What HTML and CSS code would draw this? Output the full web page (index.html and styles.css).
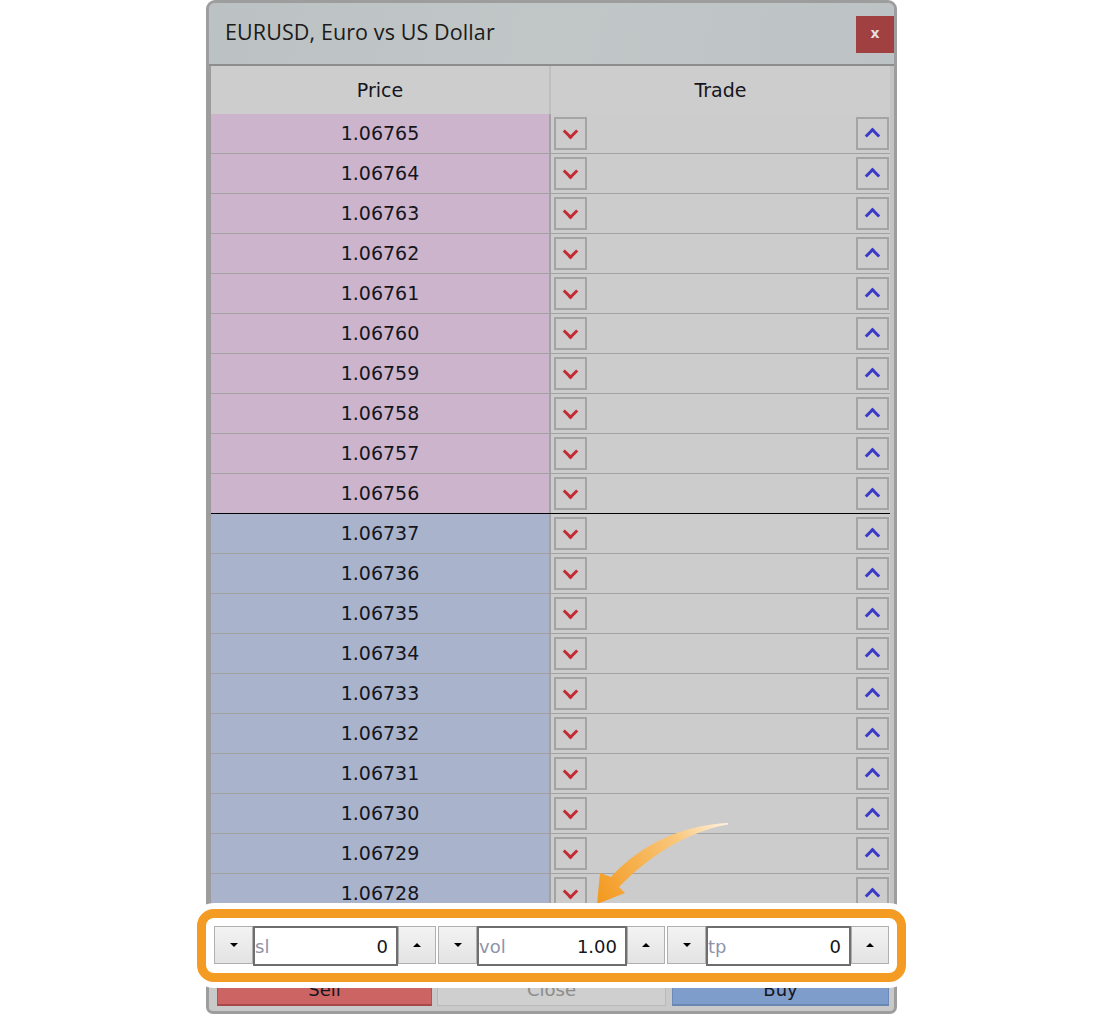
FILE: index.html
```html
<!DOCTYPE html>
<html>
<head>
<meta charset="utf-8">
<link rel="stylesheet" href="styles.css">
</head>
<body>
<div class="window">
  <div class="titlebar">
    <div class="title">EURUSD, Euro vs US Dollar</div>
    <div class="close-x">x</div>
  </div>
  <div class="grid">
    <div class="head"><div class="hcell hprice">Price</div><div class="hcell">Trade</div></div>
    <div class="row ask"><div class="price">1.06765</div><div class="trade"><span class="btn sell"></span><span class="btn buy"></span></div></div>
    <div class="row ask"><div class="price">1.06764</div><div class="trade"><span class="btn sell"></span><span class="btn buy"></span></div></div>
    <div class="row ask"><div class="price">1.06763</div><div class="trade"><span class="btn sell"></span><span class="btn buy"></span></div></div>
    <div class="row ask"><div class="price">1.06762</div><div class="trade"><span class="btn sell"></span><span class="btn buy"></span></div></div>
    <div class="row ask"><div class="price">1.06761</div><div class="trade"><span class="btn sell"></span><span class="btn buy"></span></div></div>
    <div class="row ask"><div class="price">1.06760</div><div class="trade"><span class="btn sell"></span><span class="btn buy"></span></div></div>
    <div class="row ask"><div class="price">1.06759</div><div class="trade"><span class="btn sell"></span><span class="btn buy"></span></div></div>
    <div class="row ask"><div class="price">1.06758</div><div class="trade"><span class="btn sell"></span><span class="btn buy"></span></div></div>
    <div class="row ask"><div class="price">1.06757</div><div class="trade"><span class="btn sell"></span><span class="btn buy"></span></div></div>
    <div class="row ask spread"><div class="price">1.06756</div><div class="trade"><span class="btn sell"></span><span class="btn buy"></span></div></div>
    <div class="row bid"><div class="price">1.06737</div><div class="trade"><span class="btn sell"></span><span class="btn buy"></span></div></div>
    <div class="row bid"><div class="price">1.06736</div><div class="trade"><span class="btn sell"></span><span class="btn buy"></span></div></div>
    <div class="row bid"><div class="price">1.06735</div><div class="trade"><span class="btn sell"></span><span class="btn buy"></span></div></div>
    <div class="row bid"><div class="price">1.06734</div><div class="trade"><span class="btn sell"></span><span class="btn buy"></span></div></div>
    <div class="row bid"><div class="price">1.06733</div><div class="trade"><span class="btn sell"></span><span class="btn buy"></span></div></div>
    <div class="row bid"><div class="price">1.06732</div><div class="trade"><span class="btn sell"></span><span class="btn buy"></span></div></div>
    <div class="row bid"><div class="price">1.06731</div><div class="trade"><span class="btn sell"></span><span class="btn buy"></span></div></div>
    <div class="row bid"><div class="price">1.06730</div><div class="trade"><span class="btn sell"></span><span class="btn buy"></span></div></div>
    <div class="row bid"><div class="price">1.06729</div><div class="trade"><span class="btn sell"></span><span class="btn buy"></span></div></div>
    <div class="row bid"><div class="price">1.06728</div><div class="trade"><span class="btn sell"></span><span class="btn buy"></span></div></div>
  </div>

  <div class="controls">
    <div class="spin">
      <div class="sbtn"><span class="tri-down"></span></div>
      <div class="field"><span class="lbl">sl</span><span class="val">0</span></div>
      <div class="sbtn"><span class="tri-up"></span></div>
    </div>
    <div class="spin">
      <div class="sbtn"><span class="tri-down"></span></div>
      <div class="field"><span class="lbl">vol</span><span class="val">1.00</span></div>
      <div class="sbtn"><span class="tri-up"></span></div>
    </div>
    <div class="spin">
      <div class="sbtn"><span class="tri-down"></span></div>
      <div class="field"><span class="lbl">tp</span><span class="val">0</span></div>
      <div class="sbtn"><span class="tri-up"></span></div>
    </div>
  </div>

  <div class="actions">
    <div class="act act-sell">Sell</div>
    <div class="act act-close">Close</div>
    <div class="act act-buy">Buy</div>
  </div>

  <svg class="arrow" width="160" height="100" viewBox="580 815 160 100">
    <defs>
      <linearGradient id="ag" gradientUnits="userSpaceOnUse" x1="728" y1="823" x2="600" y2="900">
        <stop offset="0" stop-color="#fff3e0"/>
        <stop offset="0.35" stop-color="#f9c77c"/>
        <stop offset="1" stop-color="#f39a20"/>
      </linearGradient>
    </defs>
    <path d="M728 823 C684 825 642 843 611 877 L600 873 L597 904 L625 893 L619 887 C648 857 686 832 728 824.5 Z" fill="url(#ag)"/>
  </svg>
</div>
</body>
</html>
```
FILE: styles.css
```css
* { box-sizing: border-box; }

body {
  margin: 0;
  background: #ffffff;
  font-family: "DejaVu Sans", sans-serif;
  color: #151520;
}

.window {
  position: relative;
  margin-left: 206px;
  width: 691px;
  height: 1014px;
  border: 3px solid #9d9d9d;
  border-radius: 9px 9px 7px 7px;
  background: #c9c9c9;
}

.titlebar {
  display: flex;
  align-items: flex-start;
  height: 63px;
  background: linear-gradient(100deg, #bcc2c3 0%, #c1c6c7 50%, #bdc3c4 100%);
  border-bottom: 2px solid #8d8d8d;
  border-radius: 6px 6px 0 0;
  padding-left: 16px;
}

.title {
  font-family: "Open Sans", sans-serif;
  font-size: 21.5px;
  line-height: 24px;
  padding-top: 17px;
  color: #1b1b1b;
  letter-spacing: 0.1px;
}

.close-x {
  margin-left: auto;
  margin-top: 13px;
  width: 38px;
  height: 37px;
  background: #a14040;
  color: #e8dede;
  font-family: "DejaVu Sans", sans-serif;
  font-weight: bold;
  font-size: 14px;
  line-height: 35px;
  text-align: center;
}

.grid {
  border-left: 2px solid #9c9c9c;
  border-right: 4px solid #c3c3c3;
}

.head {
  display: grid;
  grid-template-columns: 340px 339px;
  height: 48px;
  background: #cdcdcd;
  font-size: 19px;
}

.hcell {
  text-align: center;
  line-height: 49px;
}

.hprice {
  border-right: 2px solid #bfbfbf;
}

.row {
  display: grid;
  grid-template-columns: 340px 339px;
  height: 40px;
  border-bottom: 2px solid #a2a2a2;
}

.row.spread {
  border-bottom-color: #000000;
}

.price {
  border-right: 2px solid #a2a2a2;
  text-align: center;
  font-size: 19px;
  line-height: 39px;
}

.ask .price { background: #ccb5cc; }
.bid .price { background: #a9b4cc; }

.trade {
  background: #cccccc;
  display: flex;
  justify-content: space-between;
  align-items: flex-start;
  padding: 3px 1px 0 3px;
}

.btn {
  width: 33px;
  height: 33px;
  border: 2px solid #a4a4a4;
  display: flex;
  align-items: center;
  justify-content: center;
}

.btn::after {
  content: "";
  width: 8px;
  height: 8px;
}

.sell::after {
  border-right: 3px solid #c42a31;
  border-bottom: 3px solid #c42a31;
  transform: translateY(-2px) rotate(45deg);
}

.buy::after {
  border-left: 3px solid #3a3ac8;
  border-top: 3px solid #3a3ac8;
  transform: translateY(2px) rotate(45deg);
}

.controls {
  position: relative;
  z-index: 2;
  display: grid;
  grid-template-columns: 222px 227px 222px;
  column-gap: 2px;
  margin: 12px 0 0 5px;
  width: 676px;
  height: 40px;
}

.controls::before {
  content: "";
  position: absolute;
  top: -17px;
  left: -17px;
  right: -16px;
  bottom: -16px;
  border: 9px solid #f49b23;
  border-radius: 17px;
  background: #ffffff;
  box-shadow: 0 0 0 6px #ffffff;
  z-index: -1;
}

.spin {
  display: grid;
  grid-template-columns: 39px 1fr 38px;
}

.sbtn {
  background: linear-gradient(#f3f3f3, #e3e3e3);
  border: 1px solid #b0b0b0;
  display: flex;
  align-items: center;
  justify-content: center;
  height: 38px;
}

.tri-down, .tri-up {
  width: 0;
  height: 0;
  border-left: 4px solid transparent;
  border-right: 4px solid transparent;
}
.tri-down { border-top: 4px solid #000; }
.tri-up { border-bottom: 4px solid #000; }

.field {
  background: #ffffff;
  border: 2px solid #6e6e6e;
  display: flex;
  align-items: center;
  justify-content: space-between;
  padding: 0 8px 0 0;
  font-size: 18px;
}

.lbl { color: #8d94ab; }
.val { color: #151520; }

.actions {
  display: flex;
  gap: 5px;
  margin-top: 8px;
  padding-left: 8px;
  height: 32px;
}

.act {
  height: 32px;
  font-size: 18px;
  line-height: 30px;
  text-align: center;
  border: 1px solid;
}

.act-sell {
  width: 215px;
  background: #cd6464;
  border-color: #b45050;
  border-bottom: 2px solid #a84848;
}

.act-close {
  width: 229px;
  background: #cfcfcf;
  border-color: #b9b9b9;
  color: #8c8c8c;
}

.act-buy {
  width: 217px;
  margin-left: 1px;
  background: #7f9dcb;
  border-color: #6b89b9;
  border-bottom: 2px solid #6a86b2;
}

.arrow {
  position: absolute;
  left: 371px;
  top: 812px;
  z-index: 1;
}
```
